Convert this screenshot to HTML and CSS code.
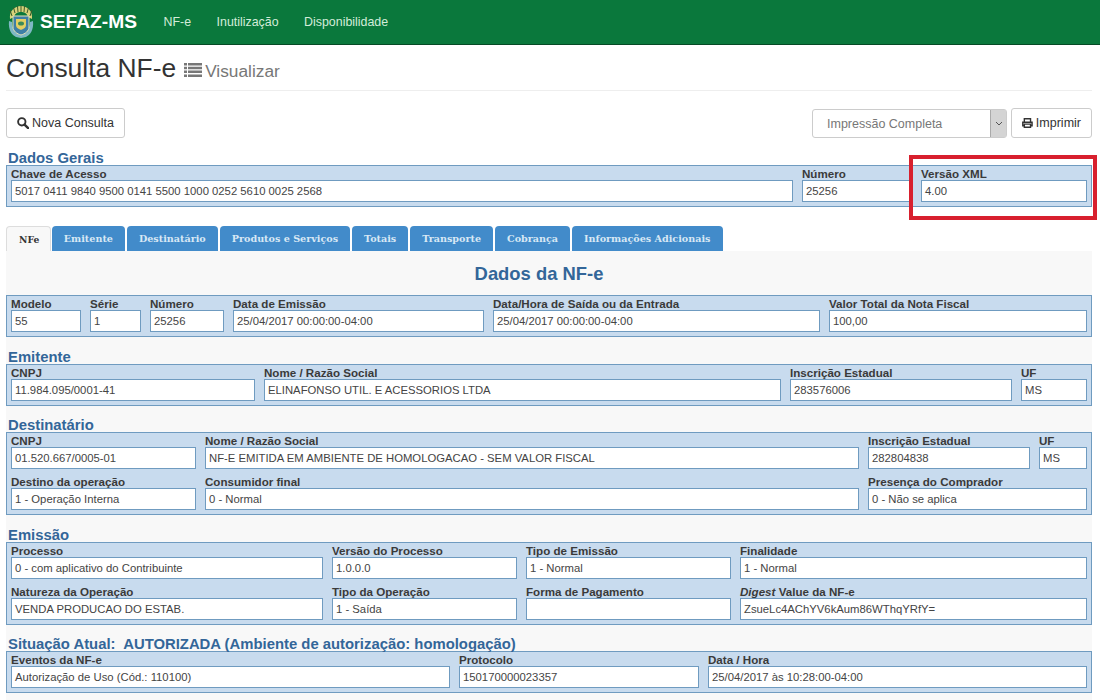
FILE: index.html
```html
<!DOCTYPE html>
<html lang="pt-BR">
<head>
    <meta charset="UTF-8">
    <title>Consulta NF-e</title>
    <link rel="stylesheet" href="styles.css">
</head>
<body>
    <nav class="navbar">
        <svg class="logo" viewBox="0 0 28 34" width="28" height="34">
            <path d="M3 14 C2 6 8 1 14 1 C20 1 26 6 25 14 L21 12 C20 8 17 7 14 7 C11 7 8 8 7 12 Z" fill="#d8d27a"/>
            <path d="M5 11 L3 5 M8 8 L6.5 2.5 M11 7 L10.5 1 M14 7 V0.5 M17 7 L17.5 1 M20 8 L21.5 2.5 M23 11 L25 5" stroke="#3a5a2a" stroke-width="1"/>
            <path d="M2 16 C1 25 5 30 9 32 L14 33 L19 32 C23 30 27 25 26 16 L23 17 C23 24 19 28 14 28 C9 28 5 24 5 17 Z" fill="#7fb8c4"/>
            <path d="M6 11 H22 V22 C22 26 18 29 14 30 C10 29 6 26 6 22 Z" fill="#3f7fa6" stroke="#e5e2b8" stroke-width="1"/>
            <path d="M9 14 H19 V20 C19 23 16 24 14 25 C12 24 9 23 9 20 Z" fill="#e3cf62"/>
            <ellipse cx="14" cy="18.5" rx="3" ry="2" fill="#3c8a58"/>
        </svg>
        <span class="brand">SEFAZ-MS</span>
        <a class="nav-link">NF-e</a>
        <a class="nav-link">Inutilização</a>
        <a class="nav-link">Disponibilidade</a>
    </nav>

    <div class="container">
        <div class="page-header">
            <h1>Consulta NF-e</h1>
            <svg class="list-icon" viewBox="0 0 18 14" width="18" height="14">
                <path d="M0 0h3v2.5H0zM4 0h14v2.5H4zM0 3.8h3v2.5H0zM4 3.8h14v2.5H4zM0 7.6h3v2.5H0zM4 7.6h14v2.5H4zM0 11.4h3v2.5H0zM4 11.4h14v2.5H4z" fill="#777"/>
            </svg>
            <small>Visualizar</small>
        </div>

        <div class="toolbar">
            <button class="btn btn-nova">
                <svg viewBox="0 0 14 14" width="12" height="12"><circle cx="5.6" cy="5.6" r="4.3" fill="none" stroke="#333" stroke-width="2.2"/><path d="M8.8 8.8 L13 13" stroke="#333" stroke-width="2.8" stroke-linecap="round"/></svg>
                Nova Consulta
            </button>
            <div class="select-box">
                <span class="select-text">Impressão Completa</span>
                <span class="select-arrow"><svg viewBox="0 0 8 5" width="8" height="5"><path d="M1 1 L4 4 L7 1" fill="none" stroke="#555" stroke-width="1"/></svg></span>
            </div>
            <button class="btn btn-print">
                <svg viewBox="0 0 14 13" width="13" height="12"><path d="M3 5V1h8v4M3 10H1V5.5h12V10h-2M3 8h8v4H3z" fill="none" stroke="#333" stroke-width="1.8"/></svg>
                Imprimir
            </button>
        </div>

        <h3 class="section-title">Dados Gerais</h3>
        <div class="box grid-gerais">
            <div class="field"><label>Chave de Acesso</label><span class="value">5017 0411 9840 9500 0141 5500 1000 0252 5610 0025 2568</span></div>
            <div class="field"><label>Número</label><span class="value">25256</span></div>
            <div class="field"><label>Versão XML</label><span class="value">4.00</span></div>
        </div>
        <div class="highlight"></div>

        <ul class="tabs">
            <li class="tab active">NFe</li>
            <li class="tab">Emitente</li>
            <li class="tab">Destinatário</li>
            <li class="tab">Produtos e Serviços</li>
            <li class="tab">Totais</li>
            <li class="tab">Transporte</li>
            <li class="tab">Cobrança</li>
            <li class="tab">Informações Adicionais</li>
        </ul>

        <div class="tab-panel">
            <h2 class="panel-title">Dados da NF-e</h2>
            <div class="box grid-nfe">
                <div class="field"><label>Modelo</label><span class="value">55</span></div>
                <div class="field"><label>Série</label><span class="value">1</span></div>
                <div class="field"><label>Número</label><span class="value">25256</span></div>
                <div class="field"><label>Data de Emissão</label><span class="value">25/04/2017 00:00:00-04:00</span></div>
                <div class="field"><label>Data/Hora de Saída ou da Entrada</label><span class="value">25/04/2017 00:00:00-04:00</span></div>
                <div class="field"><label>Valor Total da Nota Fiscal</label><span class="value">100,00</span></div>
            </div>

            <h3 class="section-title">Emitente</h3>
            <div class="box grid-emitente">
                <div class="field"><label>CNPJ</label><span class="value">11.984.095/0001-41</span></div>
                <div class="field"><label>Nome / Razão Social</label><span class="value">ELINAFONSO UTIL. E ACESSORIOS LTDA</span></div>
                <div class="field"><label>Inscrição Estadual</label><span class="value">283576006</span></div>
                <div class="field"><label>UF</label><span class="value">MS</span></div>
            </div>

            <h3 class="section-title">Destinatário</h3>
            <div class="box grid-destinatario">
                <div class="field"><label>CNPJ</label><span class="value">01.520.667/0005-01</span></div>
                <div class="field"><label>Nome / Razão Social</label><span class="value">NF-E EMITIDA EM AMBIENTE DE HOMOLOGACAO - SEM VALOR FISCAL</span></div>
                <div class="field"><label>Inscrição Estadual</label><span class="value">282804838</span></div>
                <div class="field"><label>UF</label><span class="value">MS</span></div>
                <div class="field"><label>Destino da operação</label><span class="value">1 - Operação Interna</span></div>
                <div class="field"><label>Consumidor final</label><span class="value">0 - Normal</span></div>
                <div class="field span-2"><label>Presença do Comprador</label><span class="value">0 - Não se aplica</span></div>
            </div>

            <h3 class="section-title">Emissão</h3>
            <div class="box grid-emissao">
                <div class="field"><label>Processo</label><span class="value">0 - com aplicativo do Contribuinte</span></div>
                <div class="field"><label>Versão do Processo</label><span class="value">1.0.0.0</span></div>
                <div class="field"><label>Tipo de Emissão</label><span class="value">1 - Normal</span></div>
                <div class="field"><label>Finalidade</label><span class="value">1 - Normal</span></div>
                <div class="field"><label>Natureza da Operação</label><span class="value">VENDA PRODUCAO DO ESTAB.</span></div>
                <div class="field"><label>Tipo da Operação</label><span class="value">1 - Saída</span></div>
                <div class="field"><label>Forma de Pagamento</label><span class="value"></span></div>
                <div class="field"><label><i>Digest</i> Value da NF-e</label><span class="value">ZsueLc4AChYV6kAum86WThqYRfY=</span></div>
            </div>

            <h3 class="section-title">Situação Atual:&nbsp; AUTORIZADA (Ambiente de autorização: homologação)</h3>
            <div class="box grid-situacao">
                <div class="field"><label>Eventos da NF-e</label><span class="value">Autorização de Uso (Cód.: 110100)</span></div>
                <div class="field"><label>Protocolo</label><span class="value">150170000023357</span></div>
                <div class="field"><label>Data / Hora</label><span class="value">25/04/2017 às 10:28:00-04:00</span></div>
            </div>
        </div>
    </div>
</body>
</html>
```

FILE: styles.css
```css
html, body {
    height: 700px;
    overflow: hidden;
}
body {
    margin: 0;
    background-color: #fff;
    color: #333;
    font-family: "Liberation Sans", Arial, sans-serif;
    font-size: 12px;
    position: relative;
}
.navbar {
    display: flex;
    align-items: center;
    height: 44px;
    padding-left: 7px;
    background-color: #0a783c;
    border-bottom: 1px solid #064a25;
}
.logo {
    flex: none;
}
.brand {
    margin-left: 5px;
    margin-right: 26.5px;
    color: #fff;
    font-size: 19.2px;
    font-weight: bold;
}
.nav-link {
    color: #d3ecd9;
    font-size: 12.4px;
    margin-right: 25.5px;
}
.container {
    padding: 0 8px 0 6px;
}
.page-header {
    display: flex;
    align-items: baseline;
    height: 45px;
    border-bottom: 1px solid #eee;
}
.page-header h1 {
    margin: 0;
    padding-top: 8px;
    font-size: 26.4px;
    font-weight: normal;
    line-height: 31px;
}
.list-icon {
    margin-left: 8px;
    margin-right: 3px;
}
.page-header small {
    color: #777;
    font-size: 17.3px;
}
.toolbar {
    display: flex;
    align-items: flex-end;
    margin-top: 17px;
    height: 30px;
}
.btn {
    display: flex;
    align-items: center;
    gap: 3px;
    height: 30px;
    padding: 0 10px;
    background-color: #fff;
    border: 1px solid #ccc;
    border-radius: 3px;
    color: #333;
    font-family: inherit;
    font-size: 12.5px;
}
.btn-nova {
    width: 119px;
}
.btn-print {
    width: 81px;
    margin-left: 4px;
}
.select-box {
    display: flex;
    justify-content: space-between;
    align-items: center;
    width: 195px;
    height: 29px;
    margin-left: auto;
    border: 1px solid #ccc;
    border-radius: 3px;
    box-sizing: border-box;
    color: #777;
    font-size: 12.5px;
}
.select-text {
    padding-left: 14px;
}
.select-arrow {
    display: flex;
    align-items: center;
    justify-content: center;
    width: 15px;
    height: 27px;
    background-color: #d4d4d4;
    border-left: 1px solid #aaa;
}
.section-title {
    margin: 0;
    height: 15px;
    color: #336699;
    font-size: 14.85px;
    font-weight: bold;
    line-height: 17px;
    padding-left: 2px;
}
.toolbar + .section-title {
    margin-top: 12px;
}
.box {
    display: grid;
    column-gap: 9px;
    row-gap: 6px;
    padding: 1px 4px 4px 4px;
    background-color: #c8dbee;
    border: 1px solid #6f9bc0;
}
.field {
    min-width: 0;
}
.field label {
    display: block;
    color: #3a3a3a;
    font-size: 11.6px;
    font-weight: bold;
    line-height: 13px;
    height: 13px;
}
.value {
    display: block;
    box-sizing: border-box;
    height: 22px;
    padding-left: 3px;
    background-color: #fff;
    border: 1px solid #6f9bc0;
    color: #444;
    font-size: 11.3px;
    line-height: 20px;
    white-space: nowrap;
    overflow: hidden;
}
.span-2 {
    grid-column: span 2;
}
.grid-gerais {
    grid-template-columns: 782px 110px 1fr;
}
.grid-nfe {
    grid-template-columns: 70px 51px 74px 251px 327px 1fr;
}
.grid-emitente {
    grid-template-columns: 244px 517px 222px 1fr;
}
.grid-destinatario {
    grid-template-columns: 185px 654px 162px 1fr;
}
.grid-emissao {
    grid-template-columns: 312px 185px 205px 1fr;
}
.grid-situacao {
    grid-template-columns: 439px 240px 1fr;
}
.highlight {
    position: absolute;
    left: 909px;
    top: 155px;
    width: 180px;
    height: 57px;
    border: 4px solid #d8202e;
}
.tabs {
    display: flex;
    gap: 2px;
    margin: 19px 0 0;
    padding: 0;
    list-style: none;
}
.tab {
    box-sizing: border-box;
    height: 25px;
    padding: 0 12px;
    background-color: #428bca;
    border-radius: 4px 4px 0 0;
    color: #d8e8f5;
    font-family: "DejaVu Serif", serif;
    font-size: 9.6px;
    font-weight: bold;
    line-height: 26px;
}
.tab.active {
    margin-right: -1px;
    padding: 0 10.5px 0 12px;
    background-color: #f8f8f8;
    color: #333;
    border: 1px solid #ddd;
    border-bottom: none;
    font-size: 9.2px;
}
.tab-panel {
    height: 460px;
    background-color: #f8f8f8;
}
.panel-title {
    margin: 0;
    padding: 14px 20px 0 0;
    height: 30px;
    color: #336699;
    font-size: 18.4px;
    font-weight: bold;
    line-height: 18px;
    text-align: center;
}
.tab-panel .section-title {
    margin-top: 11.5px;
}
```
